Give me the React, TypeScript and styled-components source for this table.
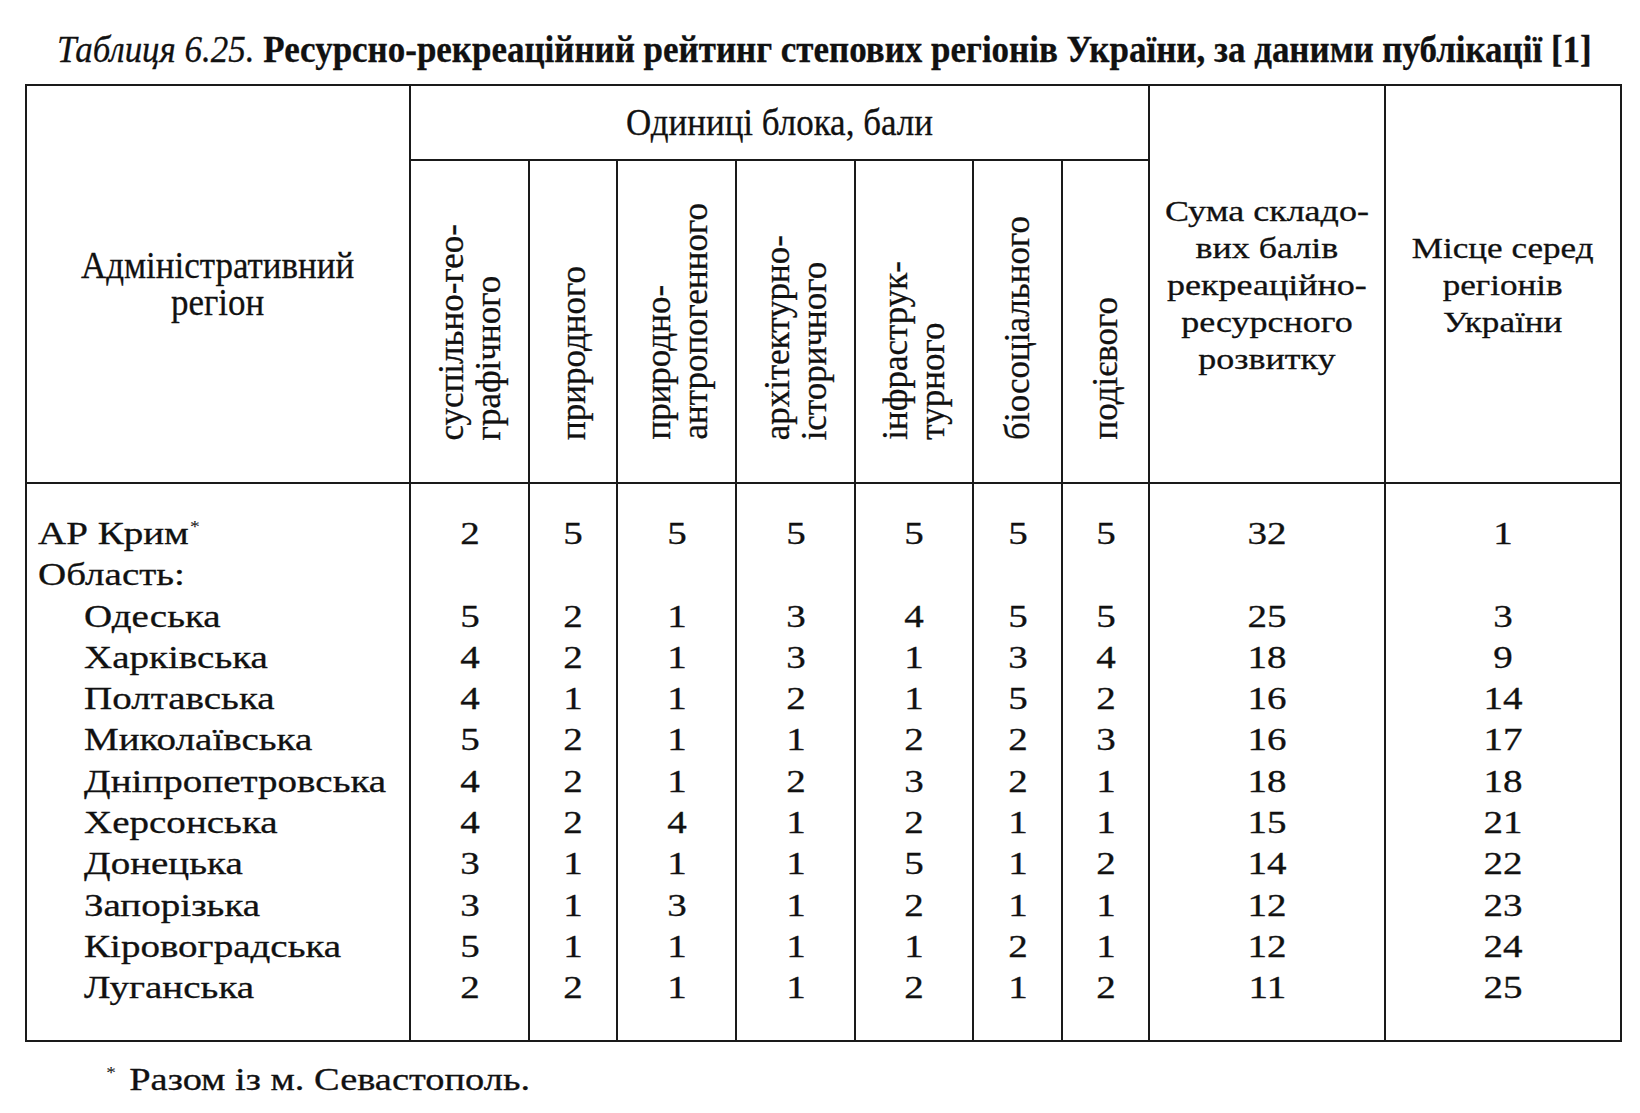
import React from 'react';
import styled, { createGlobalStyle } from 'styled-components';

const Global = createGlobalStyle`
  html, body { margin: 0; padding: 0; background: #ffffff; }
  body {
    font-family: "Liberation Serif", "Times New Roman", serif;
    color: #111111;
    -webkit-text-stroke: 0.3px #111111;
  }
`;

const Page = styled.div`
  width: 1640px;
  box-sizing: border-box;
  padding: 30px 0 24px 25px;
`;

const Caption = styled.div`
  font-size: 37px;
  line-height: 40px;
  margin: 0 0 14px 32px;
  white-space: nowrap;
`;

const CaptionLabel = styled.span`
  font-style: italic;
`;

const CaptionTitle = styled.span`
  font-weight: bold;
`;

const Grid = styled.table`
  border-collapse: collapse;
  table-layout: fixed;
  width: 1595px;
  border: 2px solid #1a1a1a;
`;

const Col = styled.col<{ $w: number }>`
  width: ${(p) => p.$w}px;
`;

const HeadRow = styled.tr<{ $h: number }>`
  height: ${(p) => p.$h}px;
`;

const HeadCell = styled.th<{ $size: number }>`
  border: 2px solid #1a1a1a;
  font-weight: normal;
  font-size: ${(p) => p.$size}px;
  line-height: 37px;
  text-align: center;
  vertical-align: middle;
  padding: 0;
  white-space: nowrap;
`;

const VerticalCell = styled.th`
  border: 2px solid #1a1a1a;
  font-weight: normal;
  font-size: 0;
  line-height: 0;
  text-align: center;
  vertical-align: bottom;
  padding: 0 0 42px 0;
`;

const VerticalText = styled.span`
  display: inline-block;
  vertical-align: bottom;
  writing-mode: vertical-rl;
  transform: rotate(180deg);
  font-size: 35px;
  line-height: 37px;
  white-space: nowrap;
  text-align: left;
`;

const Wide = styled.span<{ $sx: number; $origin?: string }>`
  display: inline-block;
  transform: scaleX(${(p) => p.$sx});
  transform-origin: ${(p) => p.$origin ?? 'center'};
`;

const BodyRow = styled.tr<{ $edge?: 'first' | 'last' }>`
  & > td {
    padding-top: ${(p) => (p.$edge === 'first' ? 29 : 0)}px;
    padding-bottom: ${(p) => (p.$edge === 'last' ? 31 : 0)}px;
  }
`;

const RegionCell = styled.td<{ $indent?: boolean }>`
  border-left: 2px solid #1a1a1a;
  border-right: 2px solid #1a1a1a;
  font-size: 32px;
  line-height: 41.3px;
  text-align: left;
  white-space: nowrap;
  padding-left: ${(p) => (p.$indent ? 57 : 11)}px !important;
  padding-right: 0;
`;

const NumCell = styled.td`
  border-left: 2px solid #1a1a1a;
  border-right: 2px solid #1a1a1a;
  font-size: 32px;
  line-height: 41.3px;
  text-align: center;
  padding-left: 0;
  padding-right: 0;
`;

const Star = styled.span`
  font-size: 0.5em;
  line-height: 0;
  vertical-align: 0.75em;
  margin-left: 1px;
  -webkit-text-stroke: 0;
`;

const Note = styled.p`
  margin: 20px 0 0 80px;
  font-size: 31.5px;
  line-height: 36px;
  white-space: nowrap;
`;

const NoteText = styled.span`
  margin-left: 11px;
`;

type Row = { name: string; star?: boolean; indent?: boolean; v: (number | null)[] };

const rows: Row[] = [
  { name: 'АР Крим', star: true, v: [2, 5, 5, 5, 5, 5, 5, 32, 1] },
  { name: 'Область:', v: [null, null, null, null, null, null, null, null, null] },
  { name: 'Одеська', indent: true, v: [5, 2, 1, 3, 4, 5, 5, 25, 3] },
  { name: 'Харківська', indent: true, v: [4, 2, 1, 3, 1, 3, 4, 18, 9] },
  { name: 'Полтавська', indent: true, v: [4, 1, 1, 2, 1, 5, 2, 16, 14] },
  { name: 'Миколаївська', indent: true, v: [5, 2, 1, 1, 2, 2, 3, 16, 17] },
  { name: 'Дніпропетровська', indent: true, v: [4, 2, 1, 2, 3, 2, 1, 18, 18] },
  { name: 'Херсонська', indent: true, v: [4, 2, 4, 1, 2, 1, 1, 15, 21] },
  { name: 'Донецька', indent: true, v: [3, 1, 1, 1, 5, 1, 2, 14, 22] },
  { name: 'Запорізька', indent: true, v: [3, 1, 3, 1, 2, 1, 1, 12, 23] },
  { name: 'Кіровоградська', indent: true, v: [5, 1, 1, 1, 1, 2, 1, 12, 24] },
  { name: 'Луганська', indent: true, v: [2, 2, 1, 1, 2, 1, 2, 11, 25] },
];

const blocks: string[][] = [
  ['суспільно-гео-', 'графічного'],
  ['природного'],
  ['природно-', 'антропогенного'],
  ['архітектурно-', 'історичного'],
  ['інфраструк-', 'турного'],
  ['біосоціального'],
  ['подієвого'],
];

const widths = [384, 119, 88, 119, 119, 118, 89, 87, 236, 236];

const STRETCH = 1.22;

export default function App() {
  return (
    <Page>
      <Global />
      <Caption>
        <Wide $sx={0.945} $origin="left">
          <CaptionLabel>Таблиця 6.25.</CaptionLabel>{' '}
          <CaptionTitle>
            Ресурсно-рекреаційний рейтинг степових регіонів України, за даними публікації [1]
          </CaptionTitle>
        </Wide>
      </Caption>
      <Grid>
        <colgroup>
          {widths.map((w, i) => (
            <Col key={i} $w={w} />
          ))}
        </colgroup>
        <thead>
          <HeadRow $h={75}>
            <HeadCell $size={37} rowSpan={2}>
              <Wide $sx={0.945}>
                Адміністративний
                <br />
                регіон
              </Wide>
            </HeadCell>
            <HeadCell $size={37} colSpan={7}>
              <Wide $sx={0.945}>Одиниці блока, бали</Wide>
            </HeadCell>
            <HeadCell $size={30} rowSpan={2}>
              <Wide $sx={1.2}>
                Сума складо-
                <br />
                вих балів
                <br />
                рекреаційно-
                <br />
                ресурсного
                <br />
                розвитку
              </Wide>
            </HeadCell>
            <HeadCell $size={30} rowSpan={2}>
              <Wide $sx={1.17}>
                Місце серед
                <br />
                регіонів
                <br />
                України
              </Wide>
            </HeadCell>
          </HeadRow>
          <HeadRow $h={323}>
            {blocks.map((lines, i) => (
              <VerticalCell key={i}>
                <VerticalText>
                  {lines.map((l, j) => (
                    <React.Fragment key={j}>
                      {j > 0 && <br />}
                      {l}
                    </React.Fragment>
                  ))}
                </VerticalText>
              </VerticalCell>
            ))}
          </HeadRow>
        </thead>
        <tbody>
          {rows.map((r, i) => (
            <BodyRow key={r.name} $edge={i === 0 ? 'first' : i === rows.length - 1 ? 'last' : undefined}>
              <RegionCell $indent={r.indent}>
                <Wide $sx={STRETCH} $origin="left">
                  {r.name}
                  {r.star && <Star>*</Star>}
                </Wide>
              </RegionCell>
              {r.v.map((n, j) => (
                <NumCell key={j}>{n !== null && <Wide $sx={STRETCH}>{n}</Wide>}</NumCell>
              ))}
            </BodyRow>
          ))}
        </tbody>
      </Grid>
      <Note>
        <Wide $sx={STRETCH} $origin="left">
          <Star>*</Star>
          <NoteText>Разом із м. Севастополь.</NoteText>
        </Wide>
      </Note>
    </Page>
  );
}
